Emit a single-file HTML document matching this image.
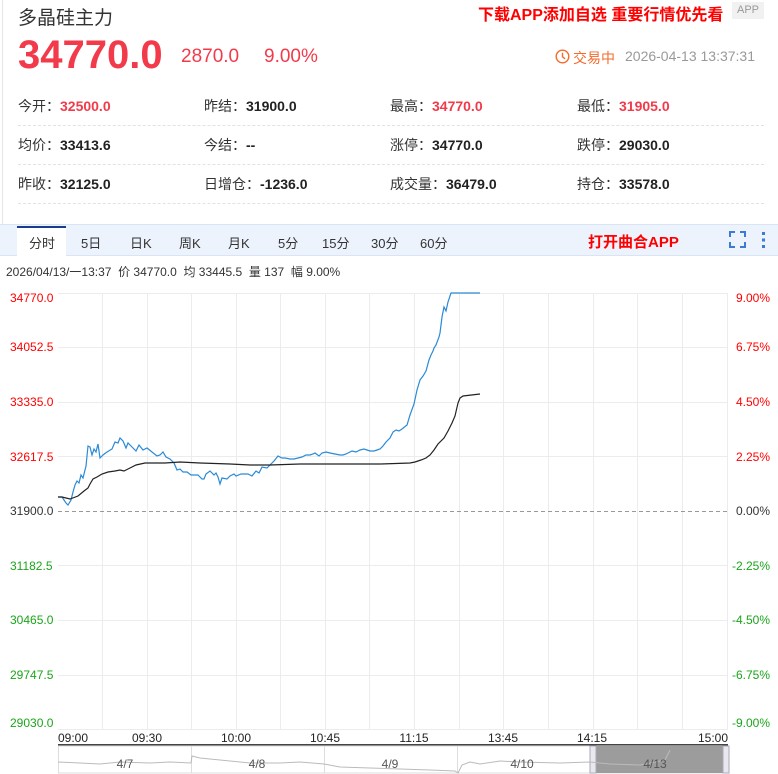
<!DOCTYPE html>
<html><head><meta charset="utf-8"><style>
*{margin:0;padding:0;box-sizing:border-box}
body{width:778px;height:774px;background:#fff;font-family:"Liberation Sans","Noto Sans CJK SC",sans-serif;position:relative;overflow:hidden;color:#333}
.a{position:absolute;white-space:nowrap}
.lbl{font-size:14px;color:#333}
.lbl b{font-weight:bold;color:#222}
.lbl b.r{color:#f23a4a}
.dash{position:absolute;left:18px;width:746px;border-top:1px dashed #e2e2e2}
.tab{position:absolute;top:233px;font-size:13px;color:#333}
</style></head><body>
<div class="a" style="left:2px;top:0;width:1px;height:224px;background:#e6e6e6"></div>
<div class="a" style="left:18px;top:3px;font-size:19px;color:#333">多晶硅主力</div>
<div class="a" style="left:478px;top:1px;font-size:16px;font-weight:bold;color:#f00">下载APP添加自选 重要行情优先看</div>
<div class="a" style="left:732px;top:2px;width:32px;height:17px;background:#f1f1f1;color:#999;font-size:11px;text-align:center;line-height:17px">APP</div>
<div class="a" style="left:18px;top:33px;font-size:40px;font-weight:bold;color:#f23a4a">34770.0</div>
<div class="a" style="left:181px;top:46px;font-size:19px;color:#f23a4a">2870.0</div>
<div class="a" style="left:264px;top:46px;font-size:19px;color:#f23a4a">9.00%</div>
<svg class="a" style="left:555px;top:49px" width="15" height="15" viewBox="0 0 15 15"><circle cx="7.5" cy="7.5" r="6.3" fill="none" stroke="#f26b2d" stroke-width="1.4"/><path d="M7.5 3.8V7.8L10 9.8" fill="none" stroke="#f26b2d" stroke-width="1.4"/></svg>
<div class="a" style="left:573px;top:48px;font-size:14px;color:#f26b2d">交易中</div>
<div class="a" style="left:625px;top:48px;font-size:14px;color:#999">2026-04-13 13:37:31</div>

<div class="a lbl" style="left:18px;top:96px">今开：<b class="r">32500.0</b></div>
<div class="a lbl" style="left:204px;top:96px">昨结：<b>31900.0</b></div>
<div class="a lbl" style="left:390px;top:96px">最高：<b class="r">34770.0</b></div>
<div class="a lbl" style="left:577px;top:96px">最低：<b class="r">31905.0</b></div>
<div class="dash" style="top:125px"></div>
<div class="a lbl" style="left:18px;top:135px">均价：<b>33413.6</b></div>
<div class="a lbl" style="left:204px;top:135px">今结：<b>--</b></div>
<div class="a lbl" style="left:390px;top:135px">涨停：<b>34770.0</b></div>
<div class="a lbl" style="left:577px;top:135px">跌停：<b>29030.0</b></div>
<div class="dash" style="top:164px"></div>
<div class="a lbl" style="left:18px;top:174px">昨收：<b>32125.0</b></div>
<div class="a lbl" style="left:204px;top:174px">日增仓：<b>-1236.0</b></div>
<div class="a lbl" style="left:390px;top:174px">成交量：<b>36479.0</b></div>
<div class="a lbl" style="left:577px;top:174px">持仓：<b>33578.0</b></div>
<div class="dash" style="top:203px"></div>

<div class="a" style="left:0;top:224px;width:778px;height:32px;background:#edf3fd;border-top:1px solid #d9e4f5;border-bottom:1px solid #d9e4f5"></div>
<div class="a" style="left:17px;top:226px;width:49px;height:31px;background:#fff;border-top:2px solid #1a3c8f"></div>
<div class="tab" style="left:29px">分时</div>
<div class="tab" style="left:81px">5日</div>
<div class="tab" style="left:130px">日K</div>
<div class="tab" style="left:179px">周K</div>
<div class="tab" style="left:228px">月K</div>
<div class="tab" style="left:278px">5分</div>
<div class="tab" style="left:322px">15分</div>
<div class="tab" style="left:371px">30分</div>
<div class="tab" style="left:420px">60分</div>
<div class="a" style="left:588px;top:231px;font-size:15px;font-weight:bold;color:#f00">打开曲合APP</div>
<svg class="a" style="left:728px;top:230px" width="40" height="20" viewBox="0 0 40 20"><path d="M2 7V2H7M12 2H17V7M17 12V17H12M7 17H2V12" fill="none" stroke="#3d7ad6" stroke-width="2"/><rect x="34" y="2" width="3" height="3" fill="#3d7ad6"/><rect x="34" y="8.5" width="3" height="3" fill="#3d7ad6"/><rect x="34" y="15" width="3" height="3" fill="#3d7ad6"/></svg>

<div class="a" style="left:6px;top:263px;font-size:12px;color:#333">2026/04/13/一13:37 &nbsp;价 34770.0 &nbsp;均 33445.5 &nbsp;量 137 &nbsp;幅 9.00%</div>

<svg class="a" style="left:0;top:0" width="778" height="774" viewBox="0 0 778 774" font-family="Liberation Sans, sans-serif" font-size="12">
<g stroke="#ececec" stroke-width="1">
<path d="M58 293.5H728M58 347.5H728M58 402.5H728M58 456.5H728M58 565.5H728M58 620.5H728M58 675.5H728M58 729.5H728"/>
<path d="M102.5 293V730M147.5 293V730M191.5 293V730M236.5 293V730M280.5 293V730M325.5 293V730M369.5 293V730M414.5 293V730M459.5 293V730M503.5 293V730M548.5 293V730M593.5 293V730M637.5 293V730M682.5 293V730M727.5 293V730"/>
</g>
<path d="M58 511.5H728" stroke="#999" stroke-dasharray="4,3"/>
<g fill="#f00"><text x="10" y="302">34770.0</text><text x="10" y="351">34052.5</text><text x="10" y="406">33335.0</text><text x="10" y="461">32617.5</text>
<text x="770" y="302" text-anchor="end">9.00%</text><text x="770" y="351" text-anchor="end">6.75%</text><text x="770" y="406" text-anchor="end">4.50%</text><text x="770" y="461" text-anchor="end">2.25%</text></g>
<g fill="#333"><text x="10" y="515">31900.0</text><text x="770" y="515" text-anchor="end">0.00%</text></g>
<g fill="#1aa51a"><text x="10" y="570">31182.5</text><text x="10" y="624">30465.0</text><text x="10" y="679">29747.5</text><text x="10" y="727">29030.0</text>
<text x="770" y="570" text-anchor="end">-2.25%</text><text x="770" y="624" text-anchor="end">-4.50%</text><text x="770" y="679" text-anchor="end">-6.75%</text><text x="770" y="727" text-anchor="end">-9.00%</text></g>
<polyline fill="none" stroke="#2a8ad6" stroke-width="1.2" points="58,497 62,497 66,503 68,505 71,500 73,492 75,485 77,481 79,483 81,475 83,478 86,466 88,446 90,447 92,455 94,449 96,452 98,444 100,458 103,455 107,452 112,449 115,442 118,443 120,438 123,441 126,448 128,443 132,447 136,451 139,445 143,450 147,448 152,452 157,456 160,455 163,452 166,457 170,459 174,463 177,470 180,469 183,472 187,472 191,475 193,475 198,475 202,479 204,479 206,474 210,471 214,475 216,473 218,477 220,484 222,478 227,479 230,476 234,474 236,476 241,474 248,474 252,476 256,471 259,473 262,467 267,468 270,465 274,461 278,456 282,458 285,458 290,459 294,459 298,458 302,457 306,455 310,455 313,454 315,453 319,456 322,453 326,452 330,453 335,454 340,455 343,455 346,454 348,453 352,451 356,452 360,450 364,449 367,450 370,451 374,451 377,450 380,449 383,446 386,442 390,438 393,432 396,430 399,431 402,429 407,425 410,415 414,404 417,390 420,380 423,376 426,371 429,360 431,355 433,351 434,348 436,345 439,337 440,333 442,317 444,307 446,311 448,302 451,293 480,293"/>
<polyline fill="none" stroke="#222" stroke-width="1.2" points="58,497 62,497 70,499 78,496 84,491 88,488 90,484 93,479 97,477 102,474 108,472 115,471 120,470 124,471 130,468 136,465 145,463 155,463 165,463 180,462 200,463 230,464 250,465 270,465 300,464 340,464 370,464 380,464 410,463 415,462 421,460 426,458 430,455 434,450 438,444 444,438 448,431 452,423 455,416 458,403 460,398 463,396 480,394"/>
<g fill="#222" font-size="12"><text x="58" y="742">09:00</text><text x="147" y="742" text-anchor="middle">09:30</text><text x="236" y="742" text-anchor="middle">10:00</text><text x="325" y="742" text-anchor="middle">10:45</text><text x="414" y="742" text-anchor="middle">11:15</text><text x="503" y="742" text-anchor="middle">13:45</text><text x="592" y="742" text-anchor="middle">14:15</text><text x="728" y="742" text-anchor="end">15:00</text></g>
<rect x="58" y="744" width="670" height="2" fill="#444"/>
<rect x="58.5" y="746" width="669" height="27" fill="#fff" stroke="#ddd"/>
<rect x="592" y="746" width="136" height="27" fill="#9c9c9c"/>
<rect x="590" y="746" width="6" height="27" fill="#e8e8ee" stroke="#aab"/>
<rect x="723" y="746" width="6" height="27" fill="#e8e8ee" stroke="#aab"/>
<path d="M191.5 746V773M324.5 746V773M457.5 746V773" stroke="#ddd"/>
<polyline fill="none" stroke="#bbb" points="58,762 80,763 100,764 120,762 150,763 170,762 191,763 192,756 200,758 220,760 250,763 280,763 300,762 324,764 340,767 370,768 400,769 430,770 455,771 458,773 462,765 470,762 480,764 500,761 520,762 560,763 590,762 610,764 640,765 650,763 665,760 670,750"/>
<g fill="#555" font-size="12" text-anchor="middle"><text x="125" y="768">4/7</text><text x="257" y="768">4/8</text><text x="390" y="768">4/9</text><text x="522" y="768">4/10</text><text x="655" y="768">4/13</text></g>
</svg>
</body></html>
